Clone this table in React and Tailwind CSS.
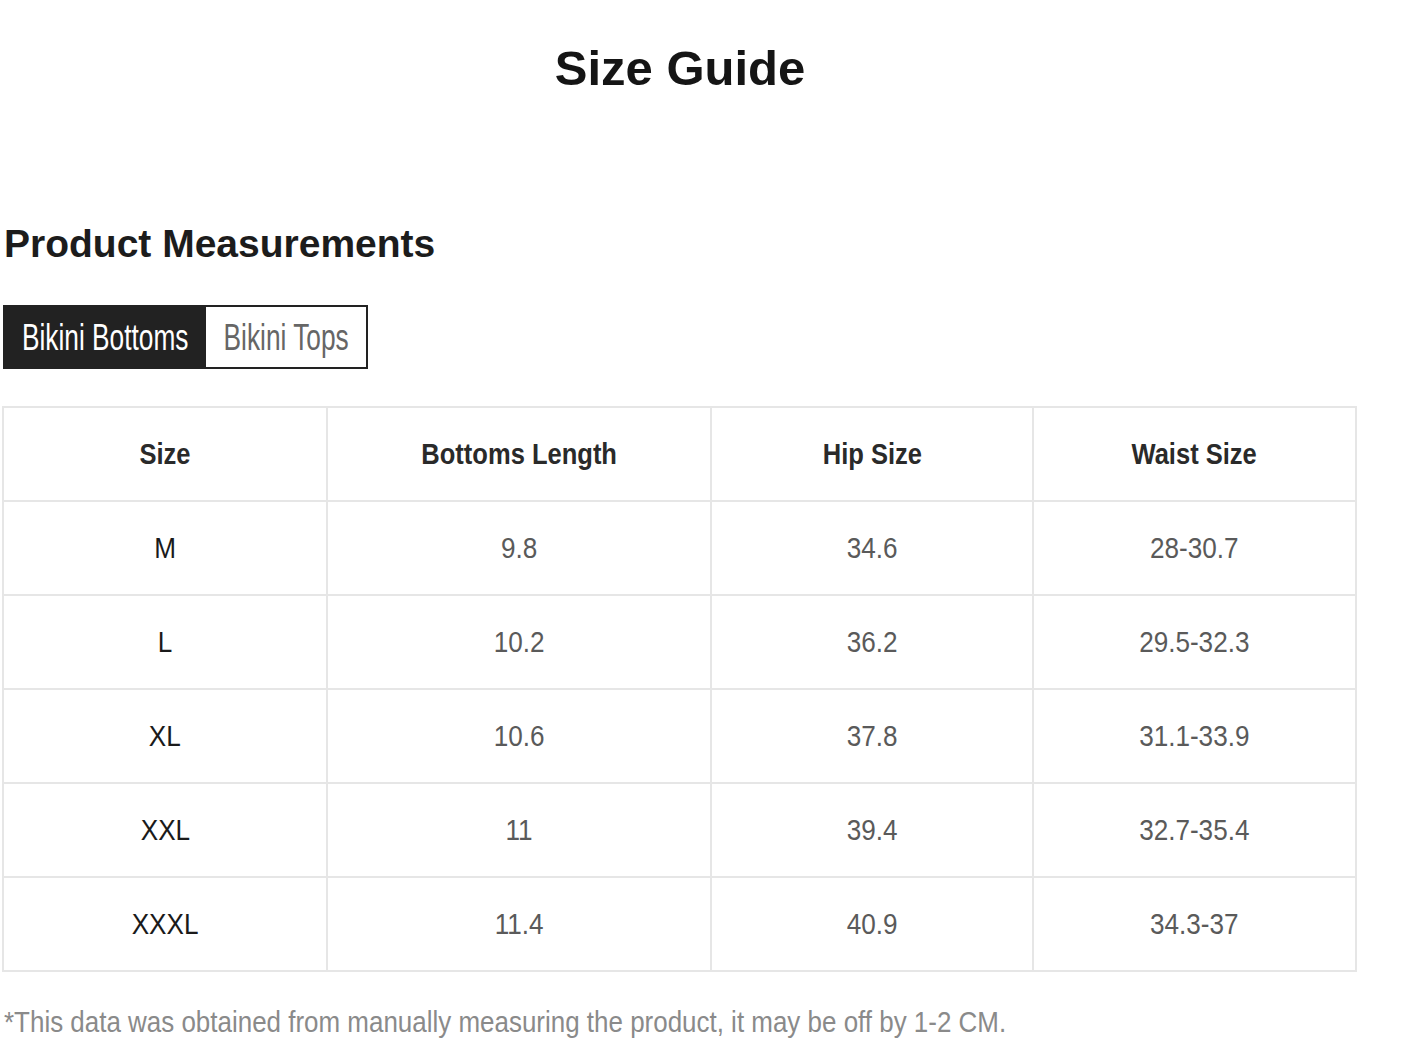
import React from 'react';

const columns = ['Size', 'Bottoms Length', 'Hip Size', 'Waist Size'];
const rows = [
    ['M', '9.8', '34.6', '28-30.7'],
    ['L', '10.2', '36.2', '29.5-32.3'],
    ['XL', '10.6', '37.8', '31.1-33.9'],
    ['XXL', '11', '39.4', '32.7-35.4'],
    ['XXXL', '11.4', '40.9', '34.3-37'],
];

export default function App() {
    return (
        <div className="w-[1416px] h-[1041px] overflow-hidden bg-white font-['Liberation_Sans',Arial,sans-serif]">
            <div className="w-[1360px]">
                <h1 className="mt-[44px] text-center text-[49px] leading-none font-bold text-[#151515]">Size Guide</h1>

                <h2 className="mt-[131px] ml-[4px] text-[39px] leading-none font-bold text-[#1c1c1c]">Product Measurements</h2>

                <div className="mt-[42px] ml-[3px] flex w-fit border-2 border-[#222]">
                    <div className="flex h-[60px] w-[201px] items-center justify-center bg-[#222]">
                        <span className="inline-block scale-x-[0.71] whitespace-nowrap text-[37px] leading-none text-white">Bikini Bottoms</span>
                    </div>
                    <div className="flex h-[60px] w-[160px] items-center justify-center bg-white">
                        <span className="inline-block scale-x-[0.71] whitespace-nowrap text-[37px] leading-none text-[#666]">Bikini Tops</span>
                    </div>
                </div>

                <div className="mt-[37px] ml-[2px] grid w-fit grid-cols-[324px_384px_322px_323px] border-t-2 border-l-2 border-[#e6e6e6]">
                    {columns.map(c => (
                        <div key={c} className="flex h-[94px] items-center justify-center border-r-2 border-b-2 border-[#e6e6e6]">
                            <span className="inline-block scale-x-[0.88] whitespace-nowrap text-[29px] leading-none font-bold text-[#2a2a2a]">{c}</span>
                        </div>
                    ))}
                    {rows.map(r => r.map((v, i) => (
                        <div key={r[0] + i} className="flex h-[94px] items-center justify-center border-r-2 border-b-2 border-[#e6e6e6]">
                            <span className={i === 0
                                ? 'inline-block scale-x-[0.9] text-[29px] leading-none text-[#1a1a1a]'
                                : 'inline-block scale-x-[0.9] text-[29px] leading-none text-[#5a5a5a]'}>{v}</span>
                        </div>
                    )))}
                </div>

                <p className="mt-[36px] ml-[4px] whitespace-nowrap text-[29px] leading-none text-[#8a8a8a]">
                    <span className="inline-block origin-left scale-x-[0.895]">*This data was obtained from manually measuring the product, it may be off by 1-2 CM.</span>
                </p>
            </div>
        </div>
    );
}
